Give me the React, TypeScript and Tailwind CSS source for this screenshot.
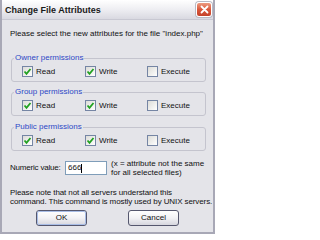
import React from "react";

function Check({ checked, label }: { checked: boolean; label: string }) {
  return (
    <div className="flex items-center gap-[3px] h-[11px]">
      <div className="w-[11px] h-[11px] border border-[#7585a4] bg-linear-to-br from-[#dcdcd8] to-white flex items-center justify-center">
        {checked && (
          <svg width="9" height="9" viewBox="0 0 9 9">
            <polyline points="1.5,4.5 3.5,6.8 7.5,2" fill="none" stroke="#21a121" strokeWidth="1.8" />
          </svg>
        )}
      </div>
      <span>{label}</span>
    </div>
  );
}

function Group({ title, className }: { title: string; className: string }) {
  return (
    <fieldset className={"ml-[9px] w-[195px] border border-[#c4c4ce] rounded-[3px] pt-[3px] pb-[4px] " + className}>
      <legend className="ml-[2px] px-[1px] text-[#2d48c6] leading-[10px]">{title}</legend>
      <div className="grid grid-cols-[63px_62px_1fr] pl-[10px]">
        <Check checked label="Read" />
        <Check checked label="Write" />
        <Check checked={false} label="Execute" />
      </div>
    </fieldset>
  );
}

function Btn({ label, def }: { label: string; def?: boolean }) {
  return (
    <div className="w-[51px] h-[16px] rounded-[3px] border border-[#55576e] bg-linear-to-b from-white via-[#f2f2f5] to-[#d6d6de] flex items-center justify-center">
      <div
        className={
          "w-full h-full rounded-[2px] flex items-center justify-center " +
          (def ? "border border-[#a8bde6]" : "")
        }
      >
        {label}
      </div>
    </div>
  );
}

export default function App() {
  return (
    <div className="w-[215px] h-[234px] flex flex-col bg-[#e4e4e9] border-x-2 border-b-2 border-[#a8a8b6] font-['Liberation_Sans',Arial,sans-serif] text-[8px] leading-[10px] text-[#111] overflow-hidden whitespace-nowrap">
      <div className="h-[20px] shrink-0 flex items-center pl-[3px] bg-linear-to-b from-white via-[#eeeef2] to-[#d9d9e1] border-b border-[#c8c8d2]">
        <span className="font-bold text-[9px] text-[#1a1a1a]">Change File Attributes</span>
        <div className="ml-auto mr-[1px] w-[16px] h-[15px] rounded-[3px] border border-white bg-linear-to-b from-[#ec9a80] via-[#d9573b] to-[#c4412a] flex items-center justify-center shadow-[0_0_0_1px_#b9b9c4]">
          <svg width="9" height="9" viewBox="0 0 9 9">
            <path d="M1.5 1.5 L7.5 7.5 M7.5 1.5 L1.5 7.5" stroke="white" strokeWidth="1.8" strokeLinecap="round" />
          </svg>
        </div>
      </div>
      <div className="flex flex-col pt-[9px]">
        <div className="pl-[8px] h-[10px]">Please select the new attributes for the file "index.php"</div>
        <Group title="Owner permissions" className="mt-[14px]" />
        <Group title="Group permissions" className="mt-[5px]" />
        <Group title="Public permissions" className="mt-[6px]" />
        <div className="mt-[10px] h-[14px] flex items-center pl-[8px]">
          <div className="w-[55px] tracking-[-0.2px]">Numeric value:</div>
          <div className="w-[42px] h-[14px] bg-white border border-[#7f9db9] flex items-center pl-[2px]">
            <span>666</span>
            <span className="w-px h-[9px] bg-black" />
          </div>
          <div className="ml-[4px] leading-[9px]">
            (x = attribute not the same
            <br />
            for all selected files)
          </div>
        </div>
        <div className="mt-[13px] pl-[8px] leading-[9px] tracking-[-0.1px]">
          Please note that not all servers understand this
          <br />
          command. This command is mostly used by UNIX servers.
        </div>
        <div className="mt-[4px] flex pl-[34px] gap-[41px]">
          <Btn label="OK" def />
          <Btn label="Cancel" />
        </div>
      </div>
    </div>
  );
}
